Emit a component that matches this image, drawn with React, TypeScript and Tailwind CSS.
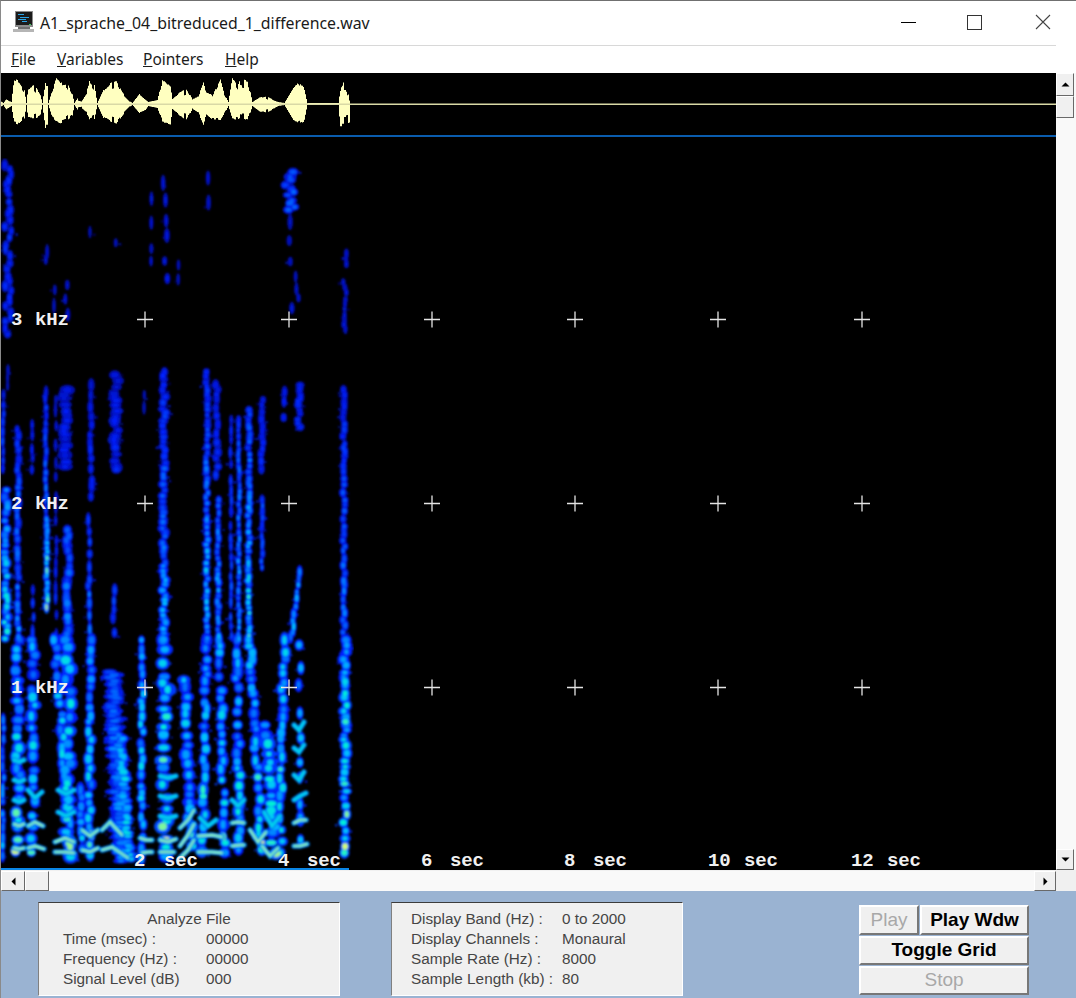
import { useMemo } from "react";

type Streak = [number, number, number, number, number, number, number?];

// x, top, bottom, half width, gain, blob step, slant
const streaks: Streak[] = [
  // high band
  [8, 165, 340, 2.2, 1.25, 6],
  [46, 243, 270, 1.0, 0.6, 12],
  [67, 285, 322, 1.3, 0.6, 12],
  [55, 290, 312, 0.8, 0.5, 14],
  [91, 232, 240, 0.8, 0.4, 10],
  [115, 232, 272, 1.0, 0.6, 17],
  [151, 178, 272, 0.9, 0.7, 20],
  [165, 183, 288, 1.6, 0.8, 17],
  [178, 265, 320, 0.8, 0.5, 22],
  [207, 178, 215, 1.2, 0.6, 24],
  [290, 172, 214, 4.0, 1.9, 4],
  [291, 222, 312, 1.4, 0.6, 17],
  [297, 255, 310, 1.1, 0.6, 14],
  [345, 250, 330, 1.2, 0.7, 5],
  // mid band
  [6, 490, 640, 3.2, 1.35, 6],
  [3, 395, 470, 1.3, 1.0, 9],
  [8, 370, 390, 0.8, 0.6, 10],
  [18, 430, 640, 2.2, 1.0, 7],
  [32, 425, 480, 1.2, 0.6, 12],
  [33, 590, 640, 1.2, 0.6, 12],
  [46, 392, 610, 1.5, 1.1, 7],
  [47, 520, 610, 1.6, 1.6, 6],
  [56, 400, 640, 0.9, 0.5, 15],
  [66, 390, 470, 5.0, 0.75, 5],
  [68, 530, 640, 3.2, 0.95, 7],
  [91, 385, 500, 2.0, 0.75, 9],
  [89, 520, 640, 1.8, 0.9, 10],
  [116, 375, 470, 4.0, 0.75, 5],
  [114, 590, 640, 1.8, 0.7, 12],
  [144, 395, 420, 0.8, 0.4, 14],
  [164, 372, 640, 3.0, 1.15, 5],
  [207, 372, 640, 2.2, 1.35, 5],
  [217, 385, 480, 2.6, 0.85, 7],
  [218, 500, 640, 2.0, 1.1, 6],
  [231, 420, 640, 1.1, 0.8, 12],
  [239, 420, 640, 1.5, 1.25, 6],
  [249, 410, 640, 2.2, 1.4, 5],
  [262, 400, 470, 2.2, 0.8, 7],
  [262, 500, 570, 1.5, 0.9, 6],
  [284, 392, 428, 1.8, 0.8, 15],
  [299, 385, 430, 2.6, 1.0, 4],
  [300, 572, 640, 1.8, 1.2, 7, -9],
  [344, 390, 640, 2.2, 1.0, 6],
  // low band
  [18, 640, 858, 4.6, 1.1, 10],
  [33, 640, 858, 4.2, 1.05, 11],
  [55, 640, 858, 3.6, 1.05, 9, 16],
  [68, 640, 858, 5.6, 1.15, 10],
  [90, 640, 858, 3.4, 1.05, 8],
  [81, 790, 855, 3.0, 0.9, 9],
  [112, 672, 862, 7.0, 0.75, 3, 10],
  [121, 735, 862, 4.6, 1.0, 4, 8],
  [142, 640, 858, 2.8, 1.05, 9],
  [165, 640, 858, 5.6, 1.15, 10],
  [185, 680, 858, 4.6, 1.05, 10, 6],
  [207, 640, 858, 3.8, 1.1, 9, -4],
  [220, 640, 858, 3.8, 1.05, 10, 4],
  [236, 640, 858, 3.6, 1.05, 10, 4],
  [250, 640, 858, 3.8, 1.12, 9, 12],
  [267, 725, 858, 5.6, 1.05, 8, 8],
  [284, 640, 858, 3.6, 1.12, 9, -4],
  [300, 645, 855, 2.8, 1.0, 23],
  [345, 640, 858, 3.8, 1.18, 6],
  [3, 720, 860, 1.8, 0.8, 9],
];

// ladder rungs: x1, y1, x2, y2, x3, y3
const rungs: number[][] = [
  [14, 800, 19, 802, 24, 800], [14, 780, 19, 782, 24, 780], [14, 760, 19, 762, 24, 760],
  [14, 824, 19, 826, 24, 824], [14, 848, 19, 849, 24, 848],
  [28, 826, 35, 822, 43, 826], [28, 848, 35, 846, 44, 849], [28, 790, 35, 798, 42, 792],
  [55, 842, 65, 838, 74, 842], [55, 852, 65, 852, 74, 853], [58, 812, 66, 816, 74, 812], [58, 790, 66, 794, 74, 790],
  [82, 830, 90, 836, 98, 830], [82, 850, 90, 852, 98, 848],
  [102, 830, 110, 822, 122, 835], [102, 850, 112, 847, 128, 858],
  [160, 776, 168, 778, 176, 776], [160, 796, 168, 798, 176, 796], [160, 816, 168, 818, 176, 816],
  [160, 840, 168, 842, 176, 839], [160, 852, 168, 852, 174, 852],
  [180, 828, 188, 820, 194, 810], [180, 846, 188, 835, 194, 824], [180, 858, 188, 850, 194, 840],
  [198, 836, 212, 835, 222, 837], [198, 852, 212, 852, 222, 853], [200, 818, 208, 826, 216, 820],
  [232, 823, 238, 822, 244, 823], [232, 846, 240, 845, 244, 845], [232, 800, 238, 806, 244, 800],
  [250, 830, 258, 842, 266, 832], [262, 846, 270, 856, 278, 848], [264, 812, 272, 826, 280, 816],
  [294, 800, 300, 796, 306, 793], [294, 823, 300, 820, 306, 820], [294, 846, 300, 846, 307, 844],
  [294, 775, 299, 780, 304, 772], [294, 748, 299, 752, 304, 745], [294, 725, 299, 730, 304, 722],
  [140, 838, 146, 840, 152, 840], [142, 853, 148, 852, 152, 852],
];

const envelope: number[][] = [
  [0, 3, 3], [3, 1, 1], [6, 5, 6], [11, 2, 2], [14, 27, 20], [19, 24, 22], [24, 15, 16], [26, 1, 1],
  [28, 18, 16], [33, 21, 16], [40, 10, 12], [42, 1, 1], [45, 21, 24], [47, 21, 24], [48, 1, 1],
  [52, 14, 14], [56, 27, 18], [60, 22, 20], [66, 24, 18], [72, 10, 12], [74, 1, 1], [78, 7, 7], [82, 4, 5],
  [86, 10, 8], [89, 27, 18], [94, 20, 16], [97, 1, 1], [103, 14, 14], [110, 24, 20], [115, 26, 22],
  [122, 12, 12], [129, 3, 3], [132, 1, 1], [139, 10, 9], [145, 5, 7], [148, 2, 2], [157, 4, 4],
  [162, 27, 20], [170, 18, 21], [172, 6, 6], [180, 14, 14], [186, 17, 18], [192, 5, 5], [198, 9, 10],
  [204, 26, 25], [206, 13, 12], [212, 9, 16], [220, 26, 17], [224, 10, 10], [228, 2, 2], [232, 27, 15],
  [237, 18, 16], [240, 26, 14], [248, 24, 17], [252, 2, 2], [260, 7, 8], [266, 8, 9], [274, 4, 5],
  [278, 2, 2], [284, 1, 1], [293, 16, 16], [298, 24, 21], [304, 16, 18], [307, 1, 1], [338, 1, 1],
  [340, 14, 24], [343, 26, 24], [346, 26, 24], [349, 4, 22], [350, 1, 1],
];

function rand(seed: number) {
  let s = seed;
  return () => {
    s = (s + 0x6d2b79f5) | 0;
    let t = Math.imul(s ^ (s >>> 15), 1 | s);
    t = (t + Math.imul(t ^ (t >>> 7), 61 | t)) ^ t;
    return ((t ^ (t >>> 14)) >>> 0) / 4294967296;
  };
}

function ramp(t: number): string {
  const stops: [number, number, number, number][] = [
    [0, 0, 10, 150],
    [0.25, 0, 30, 255],
    [0.5, 0, 115, 255],
    [0.7, 0, 190, 255],
    [0.85, 0, 240, 215],
    [1, 225, 255, 110],
  ];
  const v = Math.max(0, Math.min(1, t));
  for (let i = 1; i < stops.length; i++) {
    if (v <= stops[i][0]) {
      const a = stops[i - 1];
      const b = stops[i];
      const k = (v - a[0]) / (b[0] - a[0]);
      return `rgb(${a[1] + (b[1] - a[1]) * k},${a[2] + (b[2] - a[2]) * k},${a[3] + (b[3] - a[3]) * k})`;
    }
  }
  return "rgb(225,255,110)";
}

function heat(y: number): number {
  if (y > 780) return 0.68 + ((y - 780) / 80) * 0.1;
  if (y > 620) return 0.55 + ((y - 620) / 160) * 0.13;
  if (y > 400) return 0.26 + ((y - 400) / 220) * 0.29;
  return 0.22;
}

function Spectrogram() {
  const blobs = useMemo(() => {
    const r = rand(7);
    const out: { x: number; y: number; rx: number; ry: number; t: number }[] = [];
    for (const [x, top, bot, w, gain, step, slant = 0] of streaks) {
      for (let y = top; y < bot; y += step * (0.6 + r() * 0.8)) {
        if (y < 340 && w < 2 && r() < 0.25) continue;
        const wobble = y < 340 ? 3 : 1.1;
        const px = x + slant * ((y - top) / (bot - top)) + (r() - 0.5) * w * wobble;
        const t = heat(y) * gain * (0.7 + r() * 0.5);
        const ry = Math.min(step * 0.6, 5) * (0.6 + r() * 0.8) + 0.5;
        out.push({ x: px, y, rx: w * (0.9 + r() * 0.5) + 1, ry: ry + 1, t: t * 0.42 });
        out.push({ x: px, y, rx: w * (0.4 + r() * 0.4) + 0.4, ry: ry * 0.6, t });
        if (r() < 0.45) {
          const side = r() < 0.5 ? -1 : 1;
          out.push({ x: px + side * (w + 1 + r() * 2.5), y: y + r() * 5, rx: 0.6 + r(), ry: 0.6 + r(), t: t * 0.4 });
        }
      }
    }
    return out.sort((a, b) => a.t - b.t);
  }, []);

  const wave = useMemo(() => {
    const r = rand(21);
    let d = "";
    let j = 1;
    for (let i = 0; i < envelope.length - 1; i++) {
      const [x0, u0, l0] = envelope[i];
      const [x1, u1, l1] = envelope[i + 1];
      for (let x = x0; x < x1; x++) {
        const k = (x - x0) / (x1 - x0);
        if (x % 2 === 0) j = u0 > 3 ? (r() < 0.18 ? 0.45 + r() * 0.3 : 0.8 + r() * 0.2) : 1;
        const up = (u0 + (u1 - u0) * k) * j;
        const lo = (l0 + (l1 - l0) * k) * j;
        d += `M${x} ${(104 - up).toFixed(1)}h1V${(104 + lo).toFixed(1)}h-1z`;
      }
    }
    return d;
  }, []);

  const crossX = [145, 289, 432, 575, 718, 862];
  const crossY = [319.5, 503.5, 687.5];
  const font = { fontFamily: "'Liberation Mono', monospace" };

  return (
    <svg viewBox="1 73 1055 797" className="block w-full h-full bg-black overflow-visible">
      <defs>
        <filter id="soft" x="0" y="0" width="100%" height="100%">
          <feGaussianBlur stdDeviation="0.85" />
        </filter>
      </defs>
      <path d={wave} fill="#ffffc0" />
      <rect x="0" y="103.5" width="1056" height="1.5" fill="#d9d9a6" />
      <rect x="0" y="135" width="1056" height="2" fill="#0a5cad" />
      <g filter="url(#soft)">
        {blobs.map((b, i) => (
          <ellipse key={i} cx={b.x} cy={b.y} rx={b.rx} ry={b.ry} fill={ramp(b.t)} />
        ))}
        {rungs.map((c, i) => (
          <g key={i}>
            <polyline points={c.join(" ")} fill="none" stroke="#0078f0" strokeWidth="5.5" strokeLinecap="round" />
            <polyline points={c.join(" ")} fill="none" stroke="#00d0ee" strokeWidth="3" strokeLinecap="round" />
            {c[1] > 818 && <polyline points={c.join(" ")} fill="none" stroke="#a8f2a0" strokeWidth="1.4" strokeLinecap="round" />}
          </g>
        ))}
      </g>
      <rect x="0" y="868" width="349" height="2" fill="#0a86e6" />
      {crossX.flatMap((x) =>
        crossY.map((y) => (
          <path key={`${x}-${y}`} d={`M${x - 8} ${y}h16M${x} ${y - 8}v16`} stroke="#e4e4e4" strokeWidth="1.3" />
        )),
      )}
      <g fill="#f0f0f0" fontSize="19" fontWeight="700" letterSpacing="-0.2" style={font}>
        <text x="11" y="325">3</text>
        <text x="35" y="325">kHz</text>
        <text x="11" y="509">2</text>
        <text x="35" y="509">kHz</text>
        <text x="11" y="693">1</text>
        <text x="35" y="693">kHz</text>
        <text x="134" y="866">2</text>
        <text x="164" y="866">sec</text>
        <text x="278" y="866">4</text>
        <text x="307" y="866">sec</text>
        <text x="421" y="866">6</text>
        <text x="450" y="866">sec</text>
        <text x="564" y="866">8</text>
        <text x="593" y="866">sec</text>
        <text x="708" y="866">10</text>
        <text x="744" y="866">sec</text>
        <text x="851" y="866">12</text>
        <text x="887" y="866">sec</text>
      </g>
    </svg>
  );
}

function Arrow({ d }: { d: string }) {
  return (
    <svg width="9" height="9" viewBox="0 0 9 9">
      <path d={d} fill="#000" />
    </svg>
  );
}

function ScrollButton({ className, d }: { className: string; d: string }) {
  return (
    <div className={`flex items-center justify-center bg-[#f0f0f0] border border-white border-r-[#696969] border-b-[#696969] ${className}`}>
      <Arrow d={d} />
    </div>
  );
}

function Row({ label, value, valueClass }: { label: string; value: string; valueClass: string }) {
  return (
    <div className="flex h-5 items-center">
      <span className={valueClass}>{label}</span>
      <span>{value}</span>
    </div>
  );
}

function Panel({ className, children }: { className: string; children: React.ReactNode }) {
  return (
    <div className={`bg-[#f0f0f0] border-t border-l border-t-[#3c3c3c] border-l-[#808080] border-r border-b border-r-white border-b-white text-[15.3px] leading-5 text-[#454545] ${className}`}>
      {children}
    </div>
  );
}

function Btn({ label, disabled, className }: { label: string; disabled?: boolean; className: string }) {
  return (
    <div
      className={`flex items-center justify-center bg-[#f0f0f0] border-2 border-t-white border-l-white border-r-[#777777] border-b-[#777777] text-[19px] font-bold ${
        disabled ? "text-[#a8a8a8] font-normal" : "text-black"
      } ${className}`}
    >
      {label}
    </div>
  );
}

export default function App() {
  return (
    <div className="w-[1076px] h-[998px] overflow-hidden flex flex-col bg-white border-t border-l border-t-[#707070] border-l-[#8a8a8a] font-['Liberation_Sans',sans-serif]">
      {/* title bar */}
      <div className="h-[44px] flex items-center shrink-0">
        <svg className="ml-[12px] mr-[5px] mb-[3px]" width="22" height="22" viewBox="0 0 22 22">
          <path d="M2 0h18v16H2z" fill="#8c8c8c" />
          <path d="M3 1h16v13H3z" fill="#1b1b1b" />
          <path d="M5 3h6v1H5zM7 6h9v1H7zM5 8h8v1H5zM9 10h5v1H9z" fill="#2aa5e8" />
          <path d="M16 13h2v1h-2z" fill="#35d05a" />
          <path d="M5 16h12v2H5z" fill="#6e6e6e" />
          <path d="M0 18h21v3H0z" fill="#b5b5b5" />
        </svg>
        <span className="pt-[2px] text-[15.85px] text-[#1a1a1a] font-['Noto_Sans',sans-serif]">A1_sprache_04_bitreduced_1_difference.wav</span>
        <div className="ml-auto flex items-center h-full text-[#333]">
          <div className="w-[15px] h-px bg-black mr-[51px] mb-[2px]" />
          <div className="w-[15px] h-[15px] border border-[#333] mr-[53px] mb-[2px]" />
          <svg className="mr-[25px] mb-[2px]" width="16" height="16" viewBox="0 0 16 16">
            <path d="M1 1l14 14M15 1L1 15" stroke="#444" strokeWidth="1.1" fill="none" />
          </svg>
        </div>
      </div>
      {/* menu bar */}
      <div className="h-[28px] shrink-0 flex items-center pl-[10px] pt-[2px] text-[15.5px] text-[#1c1c1c] font-['Noto_Sans',sans-serif] relative">
        <div className="absolute left-0 top-0 w-[1055px] h-px bg-[#d8d8d8]" />
        <span className="w-[46px]"><u>F</u>ile</span>
        <span className="w-[86px]"><u>V</u>ariables</span>
        <span className="w-[82px]"><u>P</u>ointers</span>
        <span><u>H</u>elp</span>
      </div>
      {/* plot and vertical scrollbar */}
      <div className="h-[797px] shrink-0 flex">
        <div className="w-[1055px] h-full">
          <Spectrogram />
        </div>
        <div className="w-5 pr-[2px] flex flex-col bg-[#f9f9f9]">
          <ScrollButton className="h-[23px]" d="M4.5 2.5L8.5 6.5H0.5z" />
          <div className="h-[22px] bg-[#f0f0f0] border border-white border-r-[#696969] border-b-[#696969]" />
          <div className="flex-1" />
          <ScrollButton className="h-[21px]" d="M4.5 6.5L0.5 2.5H8.5z" />
        </div>
      </div>
      {/* horizontal scrollbar */}
      <div className="h-[21px] shrink-0 flex bg-[#f9f9f9] border-t border-[#f0f0f0]">
        <ScrollButton className="w-[24px]" d="M2.5 4.5L6.5 0.5V8.5z" />
        <div className="w-[24px] bg-[#f0f0f0] border border-white border-r-[#696969] border-b-[#696969]" />
        <div className="flex-1" />
        <ScrollButton className="w-[22px]" d="M6.5 4.5L2.5 0.5V8.5z" />
        <div className="w-5 bg-[#f0f0f0]" />
      </div>
      {/* info panels and buttons */}
      <div className="flex-1 bg-[#9ab3d2] flex pt-[11px] pb-[1px] pl-[37px] items-start">
        <Panel className="w-[302px] h-[94px] pl-[24px] pt-[6px]">
          <div className="h-5 pr-[24px] text-center">Analyze File</div>
          <Row label="Time (msec) :" value="00000" valueClass="w-[143px]" />
          <Row label="Frequency (Hz) :" value="00000" valueClass="w-[143px]" />
          <Row label="Signal Level (dB)" value="000" valueClass="w-[143px]" />
        </Panel>
        <Panel className="w-[292px] h-[94px] ml-[51px] pl-[19px] pt-[6px]">
          <Row label="Display Band (Hz) :" value="0 to 2000" valueClass="w-[151px]" />
          <Row label="Display Channels :" value="Monaural" valueClass="w-[151px]" />
          <Row label="Sample Rate (Hz) :" value="8000" valueClass="w-[151px]" />
          <Row label="Sample Length (kb) :" value="80" valueClass="w-[151px]" />
        </Panel>
        <div className="ml-[176px] mt-[3px] w-[170px] flex flex-col gap-px">
          <div className="flex gap-px">
            <Btn label="Play" disabled className="w-[60px] h-[30px]" />
            <Btn label="Play Wdw" className="flex-1 h-[30px]" />
          </div>
          <Btn label="Toggle Grid" className="h-[29px]" />
          <Btn label="Stop" disabled className="h-[29px]" />
        </div>
      </div>
    </div>
  );
}
